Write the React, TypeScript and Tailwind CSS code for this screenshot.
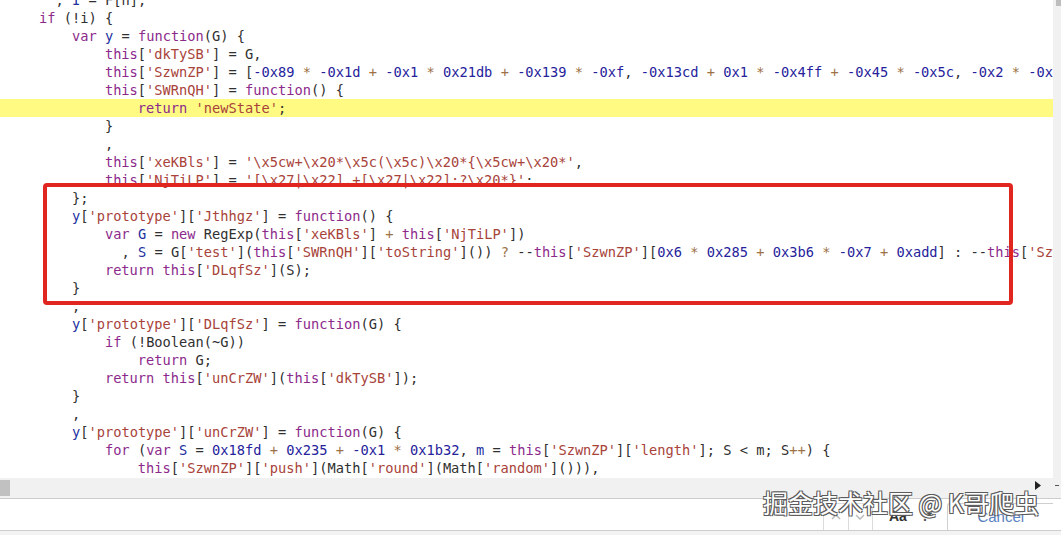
import React from 'react';

const lines = [
    "      , I = F[n],",
    "    if (!i) {",
    "        var y = function(G) {",
    "            this['dkTySB'] = G,",
    "            this['SzwnZP'] = [-0x89 * -0x1d + -0x1 * 0x21db + -0x139 * -0xf, -0x13cd + 0x1 * -0x4ff + -0x45 * -0x5c, -0x2 * -0x1c7 + 0x1 * 0x5f + -0x3b5],",
    "            this['SWRnQH'] = function() {",
    "                return 'newState';",
    "            }",
    "            ,",
    "            this['xeKBls'] = '\\x5cw+\\x20*\\x5c(\\x5c)\\x20*{\\x5cw+\\x20*',",
    "            this['NjTiLP'] = '[\\x27|\\x22].+[\\x27|\\x22];?\\x20*}';",
    "        };",
    "        y['prototype']['Jthhgz'] = function() {",
    "            var G = new RegExp(this['xeKBls'] + this['NjTiLP'])",
    "              , S = G['test'](this['SWRnQH']['toString']()) ? --this['SzwnZP'][0x6 * 0x285 + 0x3b6 * -0x7 + 0xadd] : --this['SzwnZP'][0x0];",
    "            return this['DLqfSz'](S);",
    "        }",
    "        ,",
    "        y['prototype']['DLqfSz'] = function(G) {",
    "            if (!Boolean(~G))",
    "                return G;",
    "            return this['unCrZW'](this['dkTySB']);",
    "        }",
    "        ,",
    "        y['prototype']['unCrZW'] = function(G) {",
    "            for (var S = 0x18fd + 0x235 + -0x1 * 0x1b32, m = this['SzwnZP']['length']; S < m; S++) {",
    "                this['SzwnZP']['push'](Math['round'](Math['random']())),",
];

const keywords = new Set(['var', 'function', 'this', 'return', 'new', 'if', 'for']);

// rough js highlighter, good enough for the devtools look
function tokenize(line: string) {
    const re = /('(?:[^'\\]|\\.)*'?)|(-?0x[0-9a-f]+)|(\+\+|\+|\*|\?)|([A-Za-z_$][\w$]*)|(\s+)|(.)/g;
    const out: { t: string; c: string }[] = [];
    let prev = '';
    let m: RegExpExecArray | null;
    while ((m = re.exec(line))) {
        const t = m[0];
        let c = 'text-[#303030]';
        if (m[1]) c = 'text-[#a8433a]';
        else if (m[2]) c = 'text-[#25229b]';
        else if (m[3]) c = 'text-[#9c7146]';
        else if (m[4]) {
            if (keywords.has(t)) c = 'text-[#8c2a8c]';
            else if (t === 'y' || prev === 'var' || prev === ',') c = 'text-[#2230a0]';
        }
        if (!m[5]) prev = t;
        out.push({ t, c });
    }
    return out;
}

export default function App() {
    return (
        <div className="relative w-[1061px] h-[535px] overflow-hidden bg-white flex flex-col">
            {/* Code view */}
            <div className="flex h-[478px] overflow-hidden">
                <div className="w-[1053px] overflow-hidden font-['DejaVu_Sans_Mono',monospace] text-[13.7px] leading-[18px]">
                    <div className="-mt-[9px]">
                        {lines.map((line, i) => (
                            <div
                                key={i}
                                className={`h-[18px] pl-[6px] whitespace-pre ${i === 6 ? 'bg-[#fffb82]' : ''}`}
                            >
                                {tokenize(line).map((tok, j) => (
                                    <span key={j} className={tok.c}>{tok.t}</span>
                                ))}
                            </div>
                        ))}
                    </div>
                </div>
                <div className="w-[8px] bg-[#f1f1f1] flex flex-col">
                    <div className="ml-[3px] w-[5px] h-[6px] bg-[#bdbdbd]" />
                </div>
            </div>

            {/* Horizontal scrollbar */}
            <div className="h-[20px] bg-[#f1f1f1] flex items-center justify-between">
                <div className="w-[10px] h-[16px] bg-[#c1c1c1]" />
                <div className="flex items-center gap-[14px] mr-[2px] mb-[6px]">
                    <svg width="6" height="9" viewBox="0 0 6 9">
                        <path d="M0 0 L6 4.5 L0 9 Z" fill="#222" />
                    </svg>
                    <div className="w-[4px] h-[1px] bg-[#555]" />
                </div>
            </div>

            {/* Search bar */}
            <div className="h-[33px] border-y border-[#cdcdcd] bg-white flex items-end pl-[823px] font-['Liberation_Sans',sans-serif]">
                <div className="flex h-[27px] w-[50px] border-x border-t border-[#dcdcdc]">
                    <div className="flex-1 border-r border-[#dcdcdc] flex items-center justify-center">
                        <svg width="10" height="6" viewBox="0 0 10 6">
                            <path d="M1 5 L5 1 L9 5" stroke="#bbb" strokeWidth="1.5" fill="none" />
                        </svg>
                    </div>
                    <div className="flex-1 flex items-center justify-center">
                        <svg width="10" height="6" viewBox="0 0 10 6">
                            <path d="M1 1 L5 5 L9 1" stroke="#bbb" strokeWidth="1.5" fill="none" />
                        </svg>
                    </div>
                </div>
                <div className="ml-[16px] h-[27px] flex items-center text-[14px] font-bold text-[#333]">Aa</div>
                <div className="ml-[16px] h-[27px] flex items-center text-[14px] font-bold text-[#555]">.*</div>
                <div className="ml-[15px] h-[27px] w-[106px] border-l border-t border-[#cfcfcf] rounded-tl-[3px] flex items-center justify-center text-[15px] text-[#5a7fbf]">
                    Cancel
                </div>
            </div>
            <div className="flex-1 bg-[#f3f3f3]" />

            {/* Red annotation box */}
            <div className="absolute left-[43px] top-[183px] w-[970px] h-[122px] border-4 border-[#e0261e] rounded-[4px]" />

            {/* Watermark */}
            <div className="absolute left-[763px] top-[487px] whitespace-nowrap text-[25px] leading-[30px] text-white font-['Noto_Sans_CJK_SC',sans-serif] [text-shadow:1px_1px_0_#5a5a5a,-1px_-1px_0_#5a5a5a,1px_-1px_0_#5a5a5a,-1px_1px_0_#5a5a5a]">
                掘金技术社区 @ K哥爬虫
            </div>
        </div>
    );
}
